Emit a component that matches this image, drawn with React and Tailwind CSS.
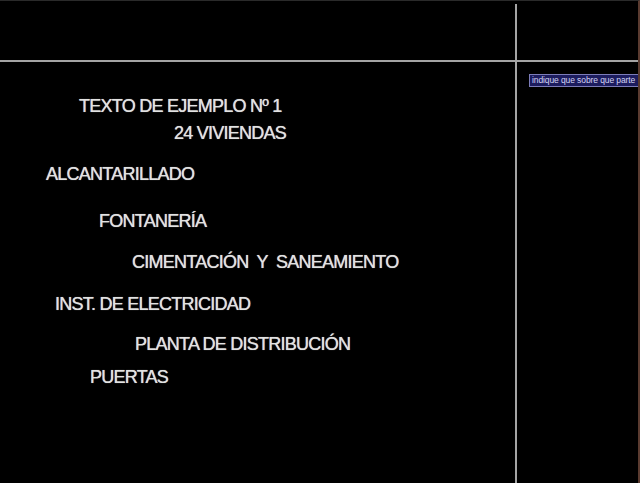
import React from "react";

const lines = [
  { text: "TEXTO DE EJEMPLO Nº 1", cls: "mt-[96px] ml-[79px]" },
  { text: "24 VIVIENDAS", cls: "mt-[9px] ml-[174px]" },
  { text: "ALCANTARILLADO", cls: "mt-[23px] ml-[46px]" },
  { text: "FONTANERÍA", cls: "mt-[29px] ml-[99px]" },
  { text: "CIMENTACIÓN  Y  SANEAMIENTO", cls: "mt-[23px] ml-[132px]" },
  { text: "INST. DE ELECTRICIDAD", cls: "mt-[24px] ml-[55px]" },
  { text: "PLANTA DE DISTRIBUCIÓN", cls: "mt-[22px] ml-[135px]" },
  { text: "PUERTAS", cls: "mt-[15px] ml-[90px]" },
];

export default function App() {
  return (
    <div
      className="relative w-[640px] h-[483px] overflow-hidden bg-black border-t border-[#2a2a2a] border-r-2 border-r-[#5a3b30]"
      style={{ fontFamily: '"Liberation Sans", Arial, sans-serif' }}
    >
      <div className="flex flex-col">
        {lines.map((l) => (
          <div
            key={l.text}
            className={`${l.cls} h-[18px] text-[18px] leading-[18px] tracking-[-0.75px] text-[#e2e2e2] whitespace-pre [text-shadow:0_0_0.7px_#d8d8d8]`}
          >
            {l.text}
          </div>
        ))}
      </div>

      {/* crosshair cursor */}
      <div className="absolute left-0 right-0 top-[59px] h-[2px] bg-[#a4a4a4]" />
      <div className="absolute top-[3px] bottom-0 left-[515px] w-[2px] bg-[#a4a4a4]" />

      {/* dynamic input tooltip */}
      <div className="absolute left-[529px] top-[73px] w-[120px] h-[13px] border border-[#7c7cb8] bg-[#1c1c5e] overflow-hidden">
        <div className="pl-[2px] text-[8.5px] leading-[11px] tracking-[-0.1px] text-[#d4d4f4] whitespace-nowrap">
          indique que sobre que parte
        </div>
      </div>
    </div>
  );
}
